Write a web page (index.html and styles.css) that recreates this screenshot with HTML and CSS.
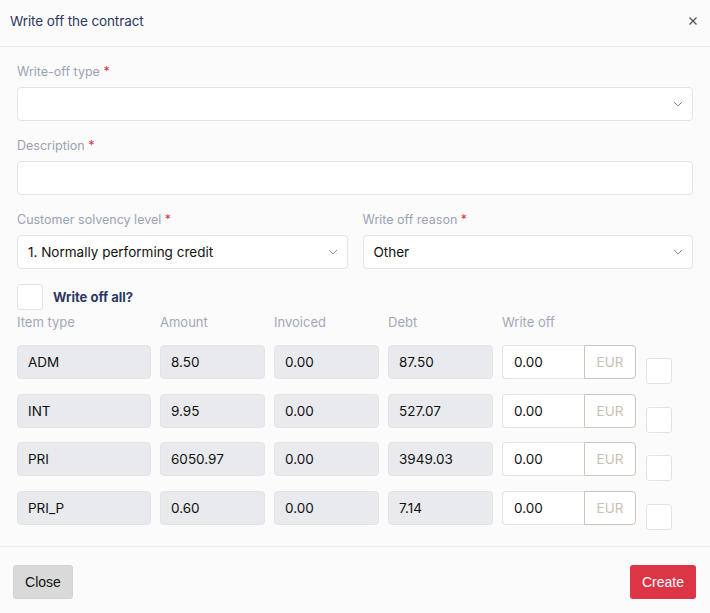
FILE: index.html
```html
<!DOCTYPE html>
<html>
<head>
<meta charset="utf-8">
<link rel="stylesheet" href="styles.css">
</head>
<body>
<div class="modal">
  <div class="modal-header">
    <div class="title">Write off the contract</div>
    <svg class="close-x" viewBox="0 0 8 8" width="8" height="8"><path d="M0.5 0.5 L7.5 7.5 M7.5 0.5 L0.5 7.5" stroke="#555" stroke-width="1.4" fill="none"/></svg>
  </div>
  <div class="modal-body">
    <div class="field">
      <label class="lbl">Write-off type <span class="req">*</span></label>
      <div class="select"><span></span><svg class="chev" viewBox="0 0 10 6" width="10" height="6"><path d="M1 1 L5 5 L9 1" fill="none" stroke="#8a8f99" stroke-width="1"/></svg></div>
    </div>
    <div class="field">
      <label class="lbl">Description <span class="req">*</span></label>
      <div class="input"></div>
    </div>
    <div class="two">
      <div class="field">
        <label class="lbl">Customer solvency level <span class="req">*</span></label>
        <div class="select"><span>1. Normally performing credit</span><svg class="chev" viewBox="0 0 10 6" width="10" height="6"><path d="M1 1 L5 5 L9 1" fill="none" stroke="#8a8f99" stroke-width="1"/></svg></div>
      </div>
      <div class="field">
        <label class="lbl">Write off reason <span class="req">*</span></label>
        <div class="select"><span>Other</span><svg class="chev" viewBox="0 0 10 6" width="10" height="6"><path d="M1 1 L5 5 L9 1" fill="none" stroke="#8a8f99" stroke-width="1"/></svg></div>
      </div>
    </div>
    <div class="all-row">
      <div class="cbox"></div>
      <span class="all-lbl">Write off all?</span>
    </div>
    <div class="table">
      <div class="th">Item type</div>
      <div class="th">Amount</div>
      <div class="th">Invoiced</div>
      <div class="th">Debt</div>
      <div class="th">Write off</div>
      <div class="th"></div>

      <div class="ro">ADM</div><div class="ro">8.50</div><div class="ro">0.00</div><div class="ro">87.50</div>
      <div class="grp"><div class="gin">0.00</div><div class="addon">EUR</div></div><div class="cbox rowbox"></div>

      <div class="ro">INT</div><div class="ro">9.95</div><div class="ro">0.00</div><div class="ro">527.07</div>
      <div class="grp"><div class="gin">0.00</div><div class="addon">EUR</div></div><div class="cbox rowbox"></div>

      <div class="ro">PRI</div><div class="ro">6050.97</div><div class="ro">0.00</div><div class="ro">3949.03</div>
      <div class="grp"><div class="gin">0.00</div><div class="addon">EUR</div></div><div class="cbox rowbox"></div>

      <div class="ro">PRI_P</div><div class="ro">0.60</div><div class="ro">0.00</div><div class="ro">7.14</div>
      <div class="grp"><div class="gin">0.00</div><div class="addon">EUR</div></div><div class="cbox rowbox"></div>
    </div>
  </div>
  <div class="modal-footer">
    <button class="btn btn-close">Close</button>
    <button class="btn btn-create">Create</button>
  </div>
</div>
</body>
</html>
```
FILE: styles.css
```css
* { box-sizing: border-box; }
html, body { margin: 0; padding: 0; }
body {
  background: #fbfbfb;
  font-family: Inter, "Noto Sans", sans-serif;
  color: #1a1a1a;
  width: 710px;
  height: 613px;
  overflow: hidden;
}
.modal { display: flex; flex-direction: column; height: 613px; }
.modal-header {
  flex: 0 0 47px;
  height: 47px;
  border-bottom: 1px solid #e6e6e6;
  display: flex;
  align-items: center;
  justify-content: space-between;
  padding: 0 13px 4px 10px;
}
.title { font-size: 13.5px; color: #2c3862; letter-spacing: -0.1px; }
.close-x { display: block; }
.modal-body {
  padding: 15px 17px 16px 17px;
  flex: 0 0 auto;
}
.field { display: flex; flex-direction: column; margin-bottom: 15px; }
.lbl { font-size: 12.5px; line-height: 20px; color: #9ca2b4; margin-bottom: 5px; }
.req { color: #e0313f; }
.select, .input {
  height: 34px;
  background: #fff;
  border: 1px solid #e2e3e6;
  border-radius: 4px;
  display: flex;
  align-items: center;
  justify-content: space-between;
  padding: 0 9px 0 10px;
  font-size: 13.5px;
  color: #111;
}
.chev { display: block; }
.two { display: grid; grid-template-columns: 1fr 1fr; column-gap: 15px; }
.all-row { display: flex; align-items: center; gap: 10px; }
.cbox {
  width: 26px; height: 26px;
  border: 1px solid #e3e3e3;
  border-radius: 3px;
  background: #fff;
}
.all-lbl { font-size: 13px; font-weight: 700; color: #2c3862; }
.table {
  display: grid;
  grid-template-columns: 134px 105px 105px 105px 134px 26px;
  column-gap: 9px;
  row-gap: 9.5px;
  margin-top: 2px;
  align-items: start;
}
.th { font-size: 13px; line-height: 20px; color: #a3a8b8; margin-bottom: 3.5px; }
.ro {
  height: 34px;
  background: #e8eaed;
  border: 1px solid #e2e4e7;
  border-radius: 4px;
  display: flex; align-items: center;
  padding: 0 10px;
  font-size: 13.5px;
  color: #111;
}
.grp { display: flex; height: 34px; }
.gin {
  flex: 1;
  background: #fff;
  border: 1px solid #e2e3e6;
  border-right: none;
  border-radius: 4px 0 0 4px;
  display: flex; align-items: center;
  padding: 0 11px;
  font-size: 13.5px;
  color: #111;
}
.addon {
  width: 52px;
  border: 1px solid #cfc4b8;
  border-radius: 0 4px 4px 0;
  display: flex; align-items: center; justify-content: center;
  font-size: 13.5px;
  color: #c9bfb4;
  background: #fff;
}
.rowbox { margin-top: 13px; margin-left: 1px; }
.modal-footer {
  border-top: 1px solid #ececec;
  flex: 1 0 auto;
  display: flex;
  justify-content: space-between;
  align-items: flex-start;
  padding: 18px 14px 0 13px;
}
.btn {
  height: 34px;
  border: none;
  border-radius: 3px;
  font-family: "Liberation Sans", Arial, sans-serif;
  font-size: 14px;
  padding: 0 10px;
}
.btn-close { background: #d9d9d9; color: #111; width: 60px; border: 1px solid #d2d2d2; }
.btn-create { background: #dc3545; color: #fff; width: 66px; }
```
